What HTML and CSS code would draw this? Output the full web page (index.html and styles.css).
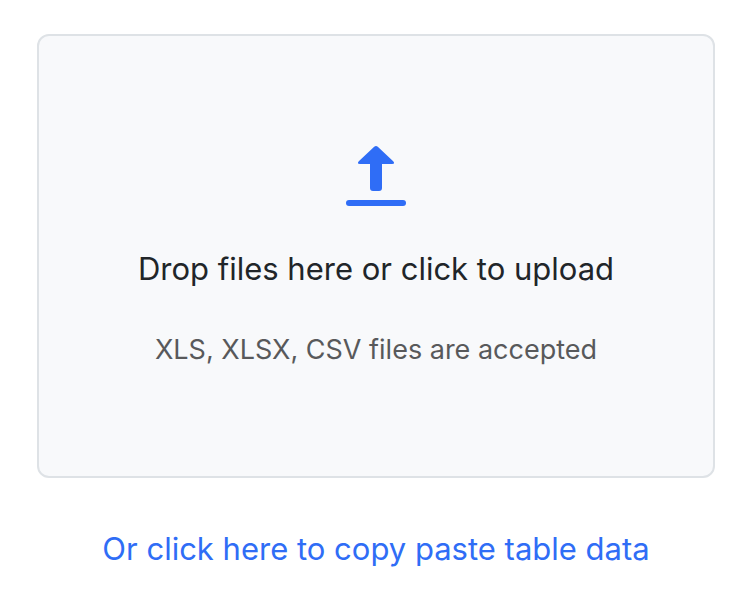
FILE: index.html
```
<!DOCTYPE html>
<html lang="en">
<head>
  <meta charset="UTF-8" />
  <meta name="viewport" content="width=device-width, initial-scale=1.0"/>
  <title>Upload files</title>
  <link rel="stylesheet" href="styles.css">
</head>
<body>
  <main class="uploader">
    <button class="dropzone" type="button">
      <svg class="upload-icon" viewBox="0 0 60 60" aria-hidden="true">
        <path d="M28.200 .8Q30-.6 31.800 .8L47.200 15.200Q49.500 18 46 18H36V42Q36 45 33 45H27Q24 45 24 42V18H14Q10.500 18 12.800 15.200Z"/>
        <rect y="54" width="60" height="6" rx="3"/>
      </svg>
      <span class="dropzone-title">Drop files here or click to upload</span>
      <span class="dropzone-hint">XLS, XLSX, CSV files are accepted</span>
    </button>
    <a class="paste-link" href="#paste">Or click here to copy paste table data</a>
  </main>
</body>
</html>
```
FILE: styles.css
```
body {
  margin: 0;
  font-family: Inter, sans-serif;
  background: #fff;
  color: #212529;
}
.uploader {
  display: flex;
  flex-direction: column;
  align-items: center;
  gap: 48px;
  padding: 34px 37px;
}
.dropzone {
  display: flex;
  flex-direction: column;
  align-items: center;
  align-self: stretch;
  padding: 110px 24px 106px;
  background: #f8f9fb;
  border: 2px solid #dee2e6;
  border-radius: 12px;
  color: #212529;
  font-family: inherit;
  cursor: pointer;
}
.upload-icon {
  width: 60px;
  height: 60px;
  margin-bottom: 40px;
  fill: #2f6df6;
}
.dropzone-title {
  margin-bottom: 38px;
  font-size: 31px;
  line-height: 46px;
}
.dropzone-hint {
  color: #58595b;
  font-size: 27px;
  line-height: 40px;
}
.paste-link {
  color: #2f6df6;
  font-size: 31px;
  line-height: 46px;
  text-decoration: none;
}
.paste-link:hover {
  text-decoration: underline;
}
```
